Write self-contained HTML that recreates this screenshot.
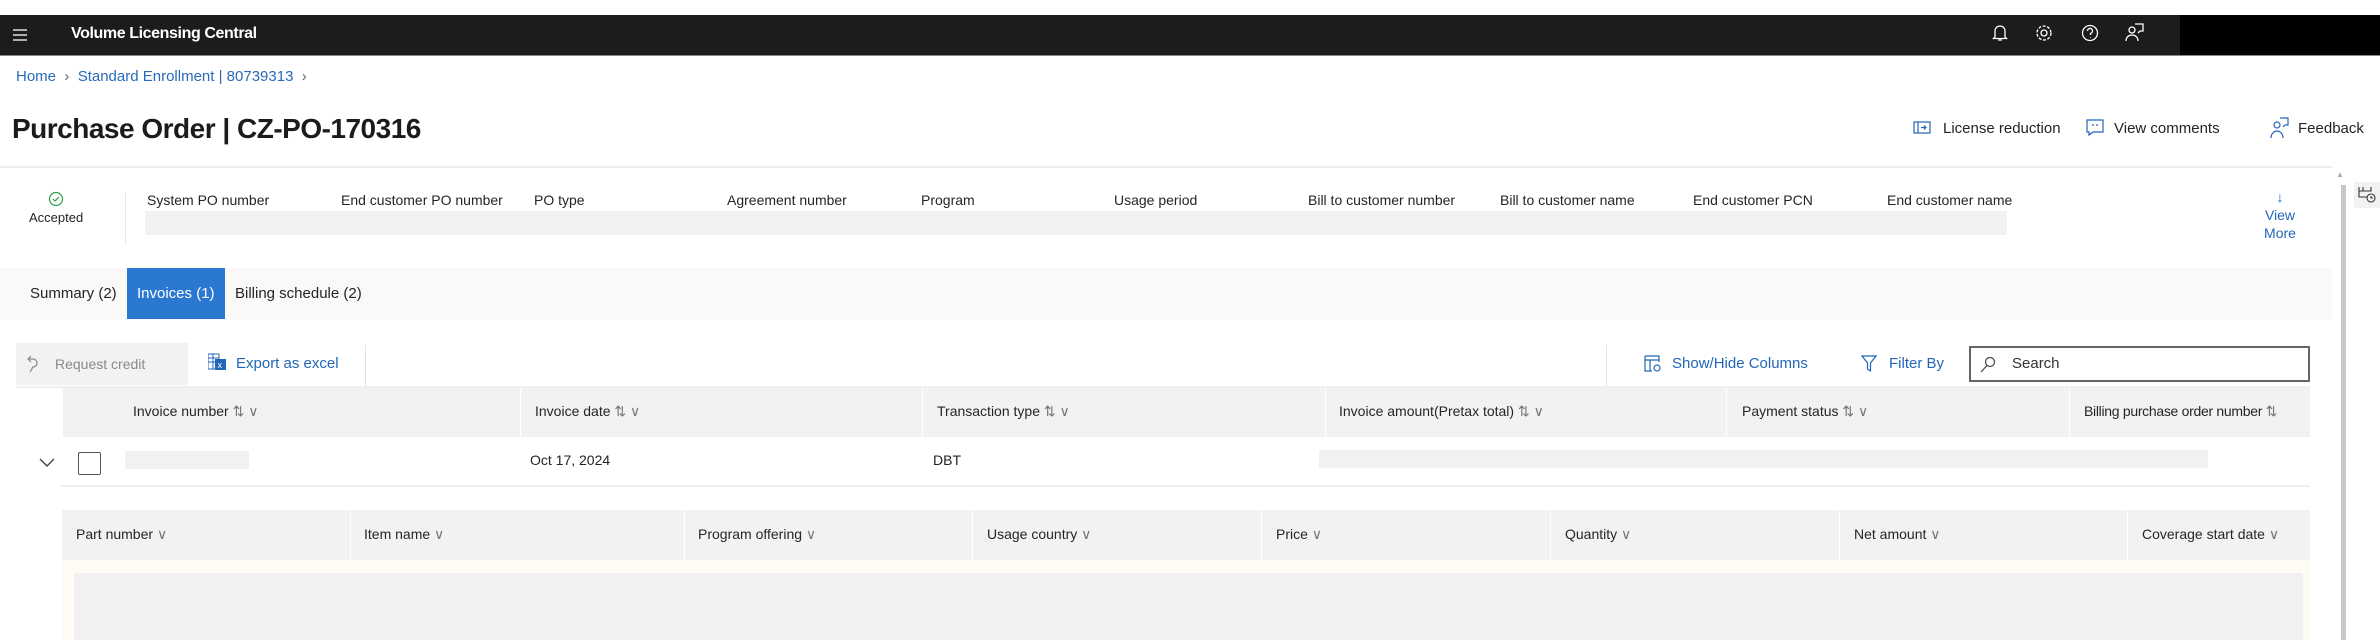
<!DOCTYPE html>
<html><head><meta charset="utf-8"><style>
*{margin:0;padding:0;box-sizing:border-box}
body{width:2380px;height:640px;overflow:hidden;background:#fff;font-family:"Liberation Sans",sans-serif;color:#242424;position:relative;font-size:14px}
.a{position:absolute;white-space:nowrap}
.blue{color:#2266b8}
.hd{font-size:14px;color:#252525}
.sep{position:absolute;width:1px;background:#e4e2e0}
svg{position:absolute}
</style></head><body>
<div class="a" style="left:0;top:15px;width:2180px;height:40px;background:#1c1c1c"></div>
<div class="a" style="left:2180px;top:15px;width:200px;height:40px;background:#000"></div>
<div class="a" style="left:0;top:55px;width:2380px;height:1px;background:#888"></div>
<svg style="left:13px;top:28px" width="16" height="14"><path d="M0 2H14M0 7H14M0 12H14" stroke="#ddd" stroke-width="1.6"/></svg>
<div class="a" style="left:71px;top:25px;color:#fff;font-size:16px;font-weight:bold;letter-spacing:-0.4px">Volume Licensing Central</div>
<svg style="left:1992px;top:24px" width="16" height="18" fill="none" stroke="#fff" stroke-width="1.3"><path d="M3 13V7a5 5 0 0 1 10 0v6l1.5 1.5h-13zM6 16h4"/></svg>
<svg style="left:2035px;top:24px" width="18" height="18" fill="none" stroke="#fff" stroke-width="1.3"><circle cx="9" cy="9" r="3"/><circle cx="9" cy="9" r="7" stroke-dasharray="3 1.5"/></svg>
<svg style="left:2081px;top:24px" width="18" height="18" fill="none" stroke="#fff" stroke-width="1.3"><circle cx="9" cy="9" r="7.5"/><path d="M6.5 7a2.5 2.5 0 1 1 3 2.4V11M9.5 13.5v.5"/></svg>
<svg style="left:2125px;top:23px" width="20" height="20" fill="none" stroke="#fff" stroke-width="1.3"><circle cx="7" cy="7" r="3"/><path d="M1 18c0-4 3-6 6-6s6 2 6 6M10 1h8v7h-3l-2 2"/></svg>

<div class="a blue" style="left:16px;top:68px;font-size:15px;color:#2a6ab8">Home <span style="color:#666">&nbsp;›&nbsp;</span> Standard Enrollment | 80739313 <span style="color:#666">&nbsp;›</span></div>
<div class="a" style="left:12px;top:113px;font-size:28px;font-weight:bold;color:#1b1b1b;letter-spacing:-0.5px">Purchase Order | CZ-PO-170316</div>

<svg style="left:1913px;top:121px" width="18" height="14" fill="none" stroke="#2266b8" stroke-width="1.2"><rect x="1" y="1" width="16" height="11"/><path d="M5 1v11M8 6.5h5M11 4.5l2 2-2 2"/></svg>
<div class="a" style="left:1943px;top:120px;font-size:15px">License reduction</div>
<svg style="left:2086px;top:119px" width="18" height="18" fill="none" stroke="#2266b8" stroke-width="1.2"><path d="M1 1h16v12H7l-4 3v-3H1z"/><path d="M7 5v2M11 5v2"/></svg>
<div class="a" style="left:2114px;top:120px;font-size:15px">View comments</div>
<svg style="left:2270px;top:117px" width="20" height="22" fill="none" stroke="#2266b8" stroke-width="1.2"><circle cx="7" cy="8" r="3"/><path d="M1 21c0-4 3-7 6-7s6 3 6 7M10 1h8v7h-3l-2 2"/></svg>
<div class="a" style="left:2298px;top:120px;font-size:15px">Feedback</div>

<div class="a" style="left:0;top:166px;width:2332px;height:2px;background:#eeeeee"></div>
<svg style="left:48px;top:191px" width="16" height="16" fill="none" stroke="#2e9e4a" stroke-width="1.2"><circle cx="8" cy="8" r="6.5"/><path d="M5 8l2 2 4-4"/></svg>
<div class="a" style="left:29px;top:210px;font-size:13px">Accepted</div>
<div class="sep" style="left:125px;top:192px;height:53px;background:#e6e6e6"></div>
<div class="a" style="left:145px;top:211px;width:1862px;height:24px;background:#f2f2f2"></div>
<div class="a hd" style="left:147px;top:192px;font-size:14px">System PO number</div>
<div class="a hd" style="left:341px;top:192px;font-size:14px">End customer PO number</div>
<div class="a hd" style="left:534px;top:192px;font-size:14px">PO type</div>
<div class="a hd" style="left:727px;top:192px;font-size:14px">Agreement number</div>
<div class="a hd" style="left:921px;top:192px;font-size:14px">Program</div>
<div class="a hd" style="left:1114px;top:192px;font-size:14px">Usage period</div>
<div class="a hd" style="left:1308px;top:192px;font-size:14px">Bill to customer number</div>
<div class="a hd" style="left:1500px;top:192px;font-size:14px">Bill to customer name</div>
<div class="a hd" style="left:1693px;top:192px;font-size:14px">End customer PCN</div>
<div class="a hd" style="left:1887px;top:192px;font-size:14px">End customer name</div>
<div class="a blue" style="left:2264px;top:188px;font-size:14px;text-align:center;width:32px;line-height:18px">↓<br>View<br>More</div>

<div class="a" style="left:2336px;top:170px;color:#aaa;font-size:8px">▲</div>
<div class="a" style="left:2341px;top:185px;width:5px;height:455px;background:#c8c8c8"></div>
<div class="a" style="left:2354px;top:182px;width:26px;height:26px;background:#f2f2f2"></div>
<svg style="left:2358px;top:186px" width="18" height="18" fill="none" stroke="#333" stroke-width="1.1"><path d="M1 1v10h8M1 5h12V1M5 1v4"/><circle cx="13" cy="12" r="4"/><path d="M13 10v2h2"/></svg>

<div class="a" style="left:0;top:268px;width:2332px;height:52px;background:#faf9f8"></div>
<div class="a" style="left:30px;top:285px;font-size:15px">Summary (2)</div>
<div class="a" style="left:127px;top:268px;width:98px;height:51px;background:#2b78d0"></div>
<div class="a" style="left:137px;top:285px;font-size:15px;color:#fff">Invoices (1)</div>
<div class="a" style="left:235px;top:285px;font-size:15px">Billing schedule (2)</div>

<div class="a" style="left:16px;top:343px;width:172px;height:42px;background:#f3f2f1"></div>
<svg style="left:27px;top:355px" width="12" height="18" fill="none" stroke="#888" stroke-width="1.2"><path d="M4 1L1 4l3 3M1 4h5a4 4 0 0 1 0 8L3 17"/></svg>
<div class="a" style="left:55px;top:356px;font-size:14px;color:#8a8a8a">Request credit</div>
<svg style="left:208px;top:353px" width="18" height="18"><rect x="0" y="1" width="11" height="15" fill="none" stroke="#2266b8"/><path d="M0 5h11M0 9h11M5 1v15" stroke="#2266b8"/><rect x="7" y="6" width="11" height="11" fill="#2266b8"/><text x="9.5" y="15" font-size="9" fill="#fff" font-family="Liberation Sans">x</text></svg>
<div class="a blue" style="left:236px;top:355px;font-size:15px">Export as excel</div>
<div class="sep" style="left:365px;top:345px;height:42px"></div>
<div class="a" style="left:16px;top:386px;width:2294px;height:2px;background:#efefef"></div>
<div class="sep" style="left:1606px;top:345px;height:42px"></div>
<svg style="left:1644px;top:355px" width="18" height="18" fill="none" stroke="#2266b8" stroke-width="1.2"><path d="M1 1h14v6M1 1v15h7M1 5h14M6 5v11"/><circle cx="13" cy="13" r="3"/></svg>
<div class="a blue" style="left:1672px;top:355px;font-size:15px">Show/Hide Columns</div>
<svg style="left:1861px;top:355px" width="16" height="18" fill="none" stroke="#2266b8" stroke-width="1.2"><path d="M1 1h14l-5.5 7v8l-3-2V8z"/></svg>
<div class="a blue" style="left:1889px;top:355px;font-size:15px">Filter By</div>
<div class="a" style="left:1969px;top:346px;width:341px;height:36px;border:2px solid #666;background:#fff"></div>
<svg style="left:1980px;top:356px" width="16" height="18" fill="none" stroke="#444" stroke-width="1.2"><circle cx="10" cy="6" r="4.5"/><path d="M7 9.5L1 16"/></svg>
<div class="a" style="left:2012px;top:355px;font-size:15px;color:#333">Search</div>

<div class="a" style="left:63px;top:388px;width:2247px;height:49px;background:#f3f2f1"></div>
<div class="sep" style="left:520px;top:388px;height:49px;background:#fff"></div>
<div class="sep" style="left:922px;top:388px;height:49px;background:#fff"></div>
<div class="sep" style="left:1325px;top:388px;height:49px;background:#fff"></div>
<div class="sep" style="left:1726px;top:388px;height:49px;background:#fff"></div>
<div class="sep" style="left:2069px;top:388px;height:49px;background:#fff"></div>
<div class="a hd" style="left:133px;top:403px">Invoice number <span style="color:#777">⇅ ∨</span></div>
<div class="a hd" style="left:535px;top:403px">Invoice date <span style="color:#777">⇅ ∨</span></div>
<div class="a hd" style="left:937px;top:403px">Transaction type <span style="color:#777">⇅ ∨</span></div>
<div class="a hd" style="left:1339px;top:403px">Invoice amount(Pretax total) <span style="color:#777">⇅ ∨</span></div>
<div class="a hd" style="left:1742px;top:403px">Payment status <span style="color:#777">⇅ ∨</span></div>
<div class="a hd" style="left:2084px;top:403px;letter-spacing:-0.3px">Billing purchase order number <span style="color:#777">⇅</span></div>

<svg style="left:39px;top:458px" width="16" height="10" fill="none" stroke="#444" stroke-width="1.4"><path d="M1 1l7 7 7-7"/></svg>
<div class="a" style="left:78px;top:452px;width:23px;height:23px;border:1.5px solid #555;border-radius:2px"></div>
<div class="a" style="left:125px;top:451px;width:124px;height:18px;background:#f1f1f1"></div>
<div class="a" style="left:530px;top:452px;font-size:14px">Oct 17, 2024</div>
<div class="a" style="left:933px;top:452px;font-size:14px">DBT</div>
<div class="a" style="left:1319px;top:450px;width:889px;height:18px;background:#f1f1f1"></div>
<div class="a" style="left:60px;top:485px;width:2250px;height:2px;background:#efefef"></div>

<div class="a" style="left:62px;top:510px;width:2248px;height:50px;background:#f3f2f1"></div>
<div class="sep" style="left:350px;top:510px;height:50px;background:#fff"></div>
<div class="sep" style="left:684px;top:510px;height:50px;background:#fff"></div>
<div class="sep" style="left:972px;top:510px;height:50px;background:#fff"></div>
<div class="sep" style="left:1261px;top:510px;height:50px;background:#fff"></div>
<div class="sep" style="left:1550px;top:510px;height:50px;background:#fff"></div>
<div class="sep" style="left:1839px;top:510px;height:50px;background:#fff"></div>
<div class="sep" style="left:2127px;top:510px;height:50px;background:#fff"></div>
<div class="a hd" style="left:76px;top:526px">Part number <span style="color:#777">∨</span></div>
<div class="a hd" style="left:364px;top:526px">Item name <span style="color:#777">∨</span></div>
<div class="a hd" style="left:698px;top:526px">Program offering <span style="color:#777">∨</span></div>
<div class="a hd" style="left:987px;top:526px">Usage country <span style="color:#777">∨</span></div>
<div class="a hd" style="left:1276px;top:526px">Price <span style="color:#777">∨</span></div>
<div class="a hd" style="left:1565px;top:526px">Quantity <span style="color:#777">∨</span></div>
<div class="a hd" style="left:1854px;top:526px">Net amount <span style="color:#777">∨</span></div>
<div class="a hd" style="left:2142px;top:526px">Coverage start date <span style="color:#777">∨</span></div>
<div class="a" style="left:62px;top:560px;width:2248px;height:80px;background:#fffcf5"></div>
<div class="a" style="left:74px;top:573px;width:2229px;height:67px;background:#f1f1f1"></div>
</body></html>
